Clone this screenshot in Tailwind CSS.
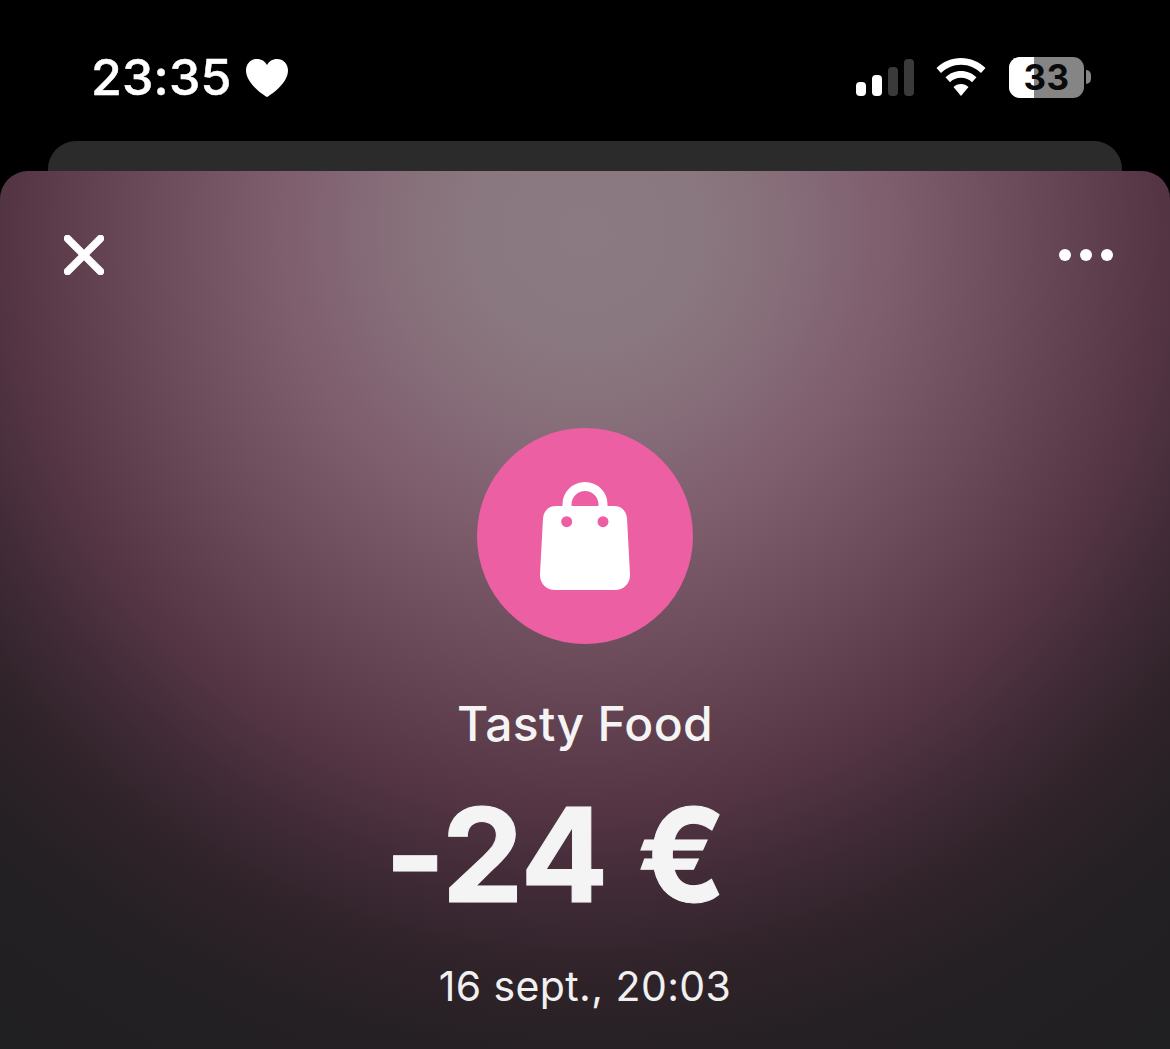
<!doctype html>
<html>
<head>
<meta charset="utf-8">
<script src="https://cdn.jsdelivr.net/npm/@tailwindcss/browser@4"></script>
</head>
<body class="bg-black">
<div class="w-[1170px] h-[1049px] overflow-hidden bg-black flex flex-col font-['Inter',sans-serif] text-white">
  <div class="h-[141px] shrink-0 flex items-start justify-between pl-[91px] pr-[79px] pt-[48px]">
    <div class="flex items-center gap-[14px] h-[58px]">
      <span class="text-[50px] leading-[58px] font-medium tracking-[0.2px] [-webkit-text-stroke:0.5px_#fff]">23:35</span>
      <svg width="42" height="38" viewBox="0 0 42 38" class="mt-[1px]"><path fill="#fff" d="M21 38C19 37 0 25 0 11.500 0 4.500 5 0 11 0c4.500 0 8 2.300 10 6 2-3.700 5.500-6 10-6 6 0 11 4.500 11 11.500C42 25 23 37 21 38z"/></svg>
    </div>
    <div class="flex items-center h-[58px]">
      <svg width="58" height="38" viewBox="0 0 58 38" class="mr-[22px]">
        <rect x="0" y="24" width="10" height="14" rx="4" fill="#fff"/>
        <rect x="16" y="17" width="10" height="21" rx="4" fill="#fff"/>
        <rect x="32" y="9" width="10" height="29" rx="4" fill="#3a3a3a"/>
        <rect x="48" y="1" width="10" height="37" rx="4" fill="#3a3a3a"/>
      </svg>
      <svg width="50" height="38" viewBox="0 0 50 38" class="mr-[23px]">
        <path fill="#fff" d="M25 0C15.500 0 7 3.700 0.500 10l4.500 5C10.300 9.800 17.300 6.700 25 6.700S39.700 9.800 45 15l4.500-5C43 3.700 34.500 0 25 0z"/>
        <path fill="#fff" d="M25 13c-6 0-11.500 2.400-15.500 6.300l4.500 5c2.800-2.800 6.700-4.500 11-4.500s8.200 1.700 11 4.500l4.500-5C36.500 15.400 31 13 25 13z"/>
        <path fill="#fff" d="M25 26c-2.900 0-5.500 1.100-7.500 3L25 38l7.500-9c-2-1.900-4.600-3-7.500-3z"/>
      </svg>
      <div class="relative flex items-center">
        <div class="relative w-[75px] h-[41px] rounded-[11px] bg-[#858585] overflow-hidden flex items-center justify-center">
          <div class="absolute left-0 top-0 bottom-0 w-[25px] bg-white"></div>
          <span class="relative text-[35px] leading-[41px] font-bold tracking-[0.5px] text-[#0a0a0a]">33</span>
        </div>
        <div class="w-[5px] h-[14px] ml-[2px] rounded-r-full bg-[#858585]"></div>
      </div>
    </div>
  </div>
  <div class="relative flex-1">
    <div class="h-[60px] mx-[48px] rounded-t-[28px] bg-[#2b2b2c]"></div>
    <div class="absolute left-0 right-0 top-[30px] bottom-0 rounded-t-[28px] bg-[radial-gradient(circle_at_585px_60px,#8b7a82_0px,#8a7880_110px,#876f7a_190px,#7f5e6e_300px,#6b4a5a_435px,#553544_575px,#3f2a35_665px,#30232a_740px,#242023_835px,#201f22_1000px)] flex flex-col items-center">
      <div class="w-full flex items-center justify-between pl-[64px] pr-[57px] pt-[64px] h-[104px]">
        <svg width="40" height="40" viewBox="0 0 40 40"><path d="M3.500 3.500L36.500 36.500M36.500 3.500L3.500 36.500" stroke="#fff" stroke-width="7.500" stroke-linecap="round"/></svg>
        <div class="flex gap-[9px]">
          <div class="w-[12px] h-[12px] rounded-full bg-white"></div>
          <div class="w-[12px] h-[12px] rounded-full bg-white"></div>
          <div class="w-[12px] h-[12px] rounded-full bg-white"></div>
        </div>
      </div>
      <div class="mt-[153px] w-[216px] h-[216px] rounded-full bg-[#ec5fa3] flex items-center justify-center">
        <svg width="90" height="108" viewBox="0 0 90 108">
          <path fill="none" stroke="#fff" stroke-width="9" d="M27 30V22.500a18 18 0 0 1 36 0V30"/>
          <path fill="#fff" d="M16 24h58c8 0 12.500 5.500 13 12.500L90 92c.5 9-6 16-15 16H15c-9 0-15.500-7-15-16L3 36.500C3.500 29.500 8 24 16 24z"/>
          <circle cx="26.700" cy="39.700" r="5.500" fill="#ec5fa3"/>
          <circle cx="63" cy="39.700" r="5.500" fill="#ec5fa3"/>
        </svg>
      </div>
      <div class="mt-[52px] text-[48px] leading-[56px] font-[450] tracking-[0.3px] text-[#f4f4f5]">Tasty Food</div>
      <div class="mt-[33px] pr-[60px] text-[130px] leading-[140px] font-bold tracking-[-1px] text-[#f4f4f5] [-webkit-text-stroke:1px_#f4f4f5]">-24 €</div>
      <div class="mt-[36px] text-[41px] leading-[50px] tracking-[0.4px] text-[#f0f0f1]">16 sept., 20:03</div>
    </div>
  </div>
</div>
</body>
</html>
